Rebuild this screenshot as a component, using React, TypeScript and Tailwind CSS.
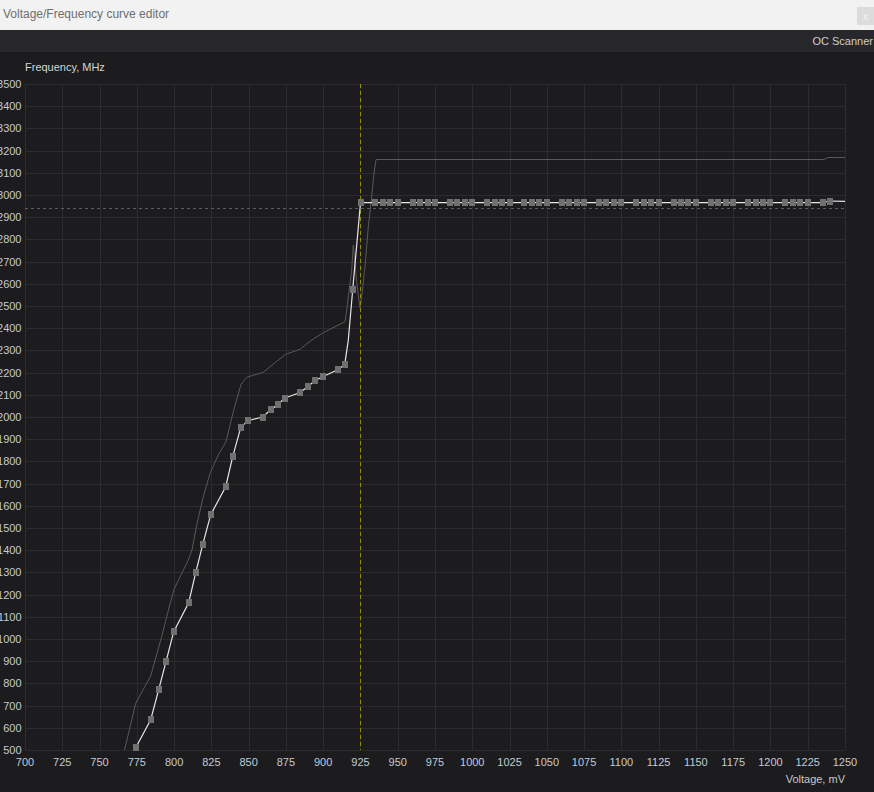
import React from 'react';

// plot geometry (page coordinates; svg viewBox starts at y = 52)
const X0 = 25;
const X1 = 845;
const Y0 = 750;
const Y1 = 84;
const xOf = (mv: number) => X0 + ((mv - 700) * (X1 - X0)) / 550;
const yOf = (mhz: number) => Y0 - ((mhz - 500) * (Y0 - Y1)) / 3000;

const voltTicks = Array.from({ length: 23 }, (_, i) => 700 + i * 25);
const freqTicks = Array.from({ length: 31 }, (_, i) => 500 + i * 100);

// measured from the editor: points that carry a handle
const lowerPoints: [number, number][] = [
  [135.7, 747.7], [150.7, 719.7], [158.7, 689.7], [166, 661.7], [173.7, 631.7],
  [188.7, 602.7], [195.7, 572.7], [202.7, 544.7], [210.7, 514.7], [225.7, 486.7],
  [232.7, 456.7], [240.7, 427.7], [247.7, 420.7], [262.7, 417], [270.7, 409.7],
  [277.7, 404.7], [284.7, 398], [299.7, 392.7], [307.7, 386.7], [314.7, 380.7],
  [322.7, 376.7], [337.7, 369.7], [344.7, 364.7], [352.7, 289.7],
];

const flatPoints: [number, number][] = (() => {
  const pts: [number, number][] = [[360.5, 202.7]];
  for (let mv = 935; mv <= 1235; mv += 5) {
    if ((mv - 930) % 25 === 0) continue;
    pts.push([xOf(mv), 202.7]);
  }
  pts.push([xOf(1240), 201]);
  return pts;
})();

const curveLine = [
  ...lowerPoints.slice(0, 23),
  [348.3, 340] as [number, number],
  lowerPoints[23],
  ...flatPoints,
  [845, 201.3] as [number, number],
];

const referenceLine: [number, number][] = [
  [124.5, 750], [135.7, 703.3], [150.7, 676], [154, 664], [161.7, 636.7], [166.7, 616.7],
  [174, 589.3], [188.3, 560], [192, 550], [196.7, 525], [203.3, 496.7], [210, 473.3],
  [218.3, 455], [226, 441.7], [233.3, 411.7], [241, 384.3], [246.7, 377.3], [263.3, 372.3],
  [276.7, 361.3], [285.7, 354.3], [300, 349.3], [311.7, 340], [323.3, 332.7], [345, 321.7],
  [346.7, 310], [351.7, 270], [353.3, 245], [357, 285], [360, 308], [361.7, 296.7],
  [365, 266.7], [368.3, 226.7], [371.7, 196.7], [374, 173], [376, 159.5], [824, 159.5],
  [828, 157.5], [845, 157.5],
];

const toPoints = (pts: [number, number][]) => pts.map(([x, y]) => `${x},${y}`).join(' ');

function CurveChart() {
  return (
    <svg
      width={874}
      height={740}
      viewBox="0 52 874 740"
      className="block"
      style={{ fontFamily: '"Liberation Sans", Arial, sans-serif' }}
    >
      <text x={25} y={71} fontSize={11} fill="#d4d4d4">
        Frequency, MHz
      </text>

      {/* grid */}
      <g stroke="#2c2c2f" strokeWidth={1} shapeRendering="crispEdges">
        {voltTicks.map(v => (
          <line key={`v${v}`} x1={Math.round(xOf(v)) + 0.5} x2={Math.round(xOf(v)) + 0.5} y1={Y1} y2={Y0} />
        ))}
        {freqTicks.map(f => (
          <line key={`f${f}`} x1={X0} x2={X1} y1={Math.round(yOf(f)) + 0.5} y2={Math.round(yOf(f)) + 0.5} />
        ))}
      </g>

      {/* axis labels */}
      <g fontSize={11} fill="#c3cad3">
        {freqTicks.map(f => (
          <text key={`fl${f}`} x={21.5} y={yOf(f) + 4} textAnchor="end">
            {f}
          </text>
        ))}
        {voltTicks.map(v => (
          <text key={`vl${v}`} x={xOf(v)} y={766} textAnchor="middle">
            {v}
          </text>
        ))}
      </g>
      <text x={845} y={783} fontSize={11} fill="#c8c8c8" textAnchor="end">
        Voltage, mV
      </text>

      {/* stock curve */}
      <polyline points={toPoints(referenceLine)} fill="none" stroke="#595959" strokeWidth={1} />

      {/* current frequency / voltage markers */}
      <line x1={X0} x2={X1} y1={208.5} y2={208.5} stroke="#5c5c5c" strokeDasharray="3 3" shapeRendering="crispEdges" />
      <line x1={360.5} x2={360.5} y1={Y1} y2={Y0} stroke="#8f8f00" strokeDasharray="4 3" shapeRendering="crispEdges" />

      {/* edited curve */}
      <polyline points={toPoints(curveLine)} fill="none" stroke="#e6e6e6" strokeWidth={1.2} />
      <g fill="#707070" shapeRendering="crispEdges">
        {[...lowerPoints, ...flatPoints].map(([x, y], i) => (
          <rect key={i} x={Math.round(x - 3)} y={Math.round(y - 3.5)} width={6} height={7} />
        ))}
      </g>
    </svg>
  );
}

export default function App() {
  return (
    <div className="w-[874px] h-[792px] flex flex-col overflow-hidden bg-[#1c1c1e]">
      {/* Title bar */}
      <div className="h-[30px] bg-[#f2f2f2] flex items-start justify-between">
        <span className="pl-[3px] pt-[7px] text-[12px] leading-[15px] text-[#6e6e6e] font-['Liberation_Sans',sans-serif]">
          Voltage/Frequency curve editor
        </span>
        <div className="mt-[7px] w-[17px] h-[18px] bg-[#dcdcdc] flex items-center justify-center text-[11px] text-[#f4f4f4] font-['Liberation_Sans',sans-serif]">
          x
        </div>
      </div>

      {/* Toolbar */}
      <div className="h-[22px] bg-[#28282c] flex items-center justify-end pr-[1px]">
        <span className="text-[11px] text-[#cdcdcd] font-['Liberation_Sans',sans-serif]">OC Scanner</span>
      </div>

      {/* Chart */}
      <div className="flex-1">
        <CurveChart />
      </div>
    </div>
  );
}
